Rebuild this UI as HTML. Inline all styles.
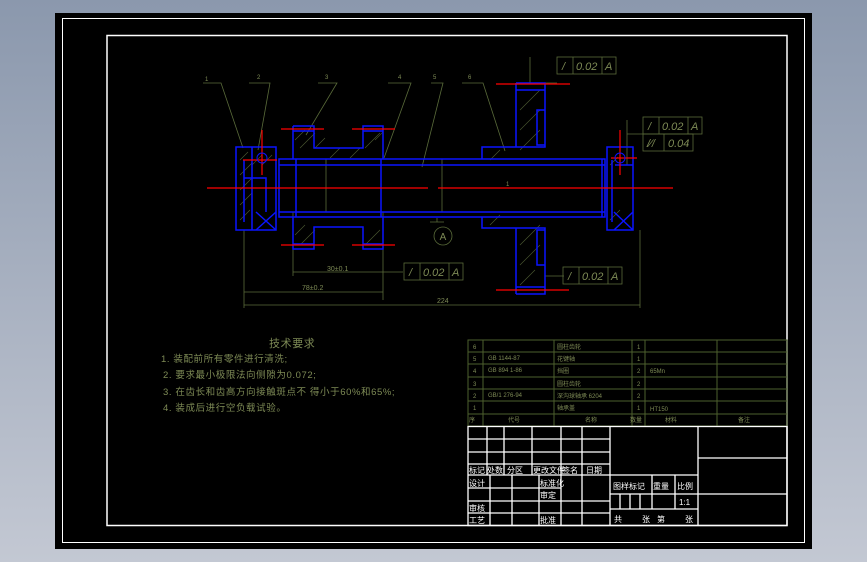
<!DOCTYPE html>
<html><head><meta charset="utf-8"><style>
html,body{margin:0;padding:0;}
body{width:867px;height:562px;background:linear-gradient(#8b98ad,#c3c8d3);overflow:hidden;}
svg{position:absolute;left:0;top:0;}
text{font-family:"Liberation Sans","Noto Sans CJK SC",sans-serif;}
</style></head><body>
<svg width="867" height="562" viewBox="0 0 867 562">
<rect x="55" y="13" width="757" height="536" fill="#000"/>
<rect x="62.5" y="18.5" width="742" height="524" fill="none" stroke="#fff" stroke-width="1"/>
<rect x="107" y="35.5" width="680" height="490" fill="none" stroke="#fff" stroke-width="1.5"/>

<g stroke="#5a6b3a" stroke-width="0.8" fill="none">
<path d="M203 83H221L243 148M249 83H270L258 150M318 83H337L306 135M388 83H411L384 158M431 83H443L422 167M462 83H483L505 151"/>
<path d="M530 74V83H557M530 57V83"/>
<path d="M627 120V165M627 134H643"/>
<path d="M293 212V276M383 212V300M244 230V308M640 230V308"/>
<path d="M293 272H383M383 272H403M244 292H383M244 305H640"/>
<path d="M545 276H564"/>
<path d="M437 218V222M430 222H444"/>
<path d="M326 159V212M442 159V212"/>
</g>
<circle cx="443" cy="236" r="9" fill="none" stroke="#5a6b3a" stroke-width="0.8"/>
<text x="443" y="240" font-size="10" fill="#7d8a55" text-anchor="middle">A</text>
<g fill="#7d8a55" font-size="6">
<text x="205" y="81">1</text><text x="257" y="79">2</text><text x="325" y="79">3</text><text x="398" y="79">4</text><text x="433" y="79">5</text><text x="468" y="79">6</text>
<text x="327" y="271" font-size="7">30±0.1</text><text x="302" y="290" font-size="7">78±0.2</text><text x="437" y="303" font-size="7">224</text>
</g>
<g stroke="#5a6b3a" stroke-width="0.8" fill="none">
<rect x="557" y="57" width="59" height="17"/><path d="M573 57V74M602 57V74"/>
<rect x="643" y="117" width="59" height="17"/><path d="M659 117V134M688 117V134"/>
<rect x="643" y="134" width="50" height="17"/><path d="M664 134V151"/>
<rect x="404" y="263" width="59" height="17"/><path d="M420 263V280M449 263V280"/>
<rect x="563" y="267" width="59" height="17"/><path d="M579 267V284M608 267V284"/>
</g>
<g fill="#7d8a55" font-size="11" font-style="italic">
<text x="562" y="70">/</text><text x="576" y="70">0.02</text><text x="605" y="70">A</text>
<text x="648" y="130">/</text><text x="662" y="130">0.02</text><text x="691" y="130">A</text>
<text x="647" y="147">/⁄/</text><text x="668" y="147">0.04</text>
<text x="409" y="276">/</text><text x="423" y="276">0.02</text><text x="452" y="276">A</text>
<text x="568" y="280">/</text><text x="582" y="280">0.02</text><text x="611" y="280">A</text>
</g>

<g stroke="#4d5a33" stroke-width="0.6">
<path d="M240 160l8-8M240 175l12-12M240 190l12-12M240 205l12-12M240 220l10-10M252 165l10-10M262 165l10-10M295 140l10-10M300 148l15-15M315 148l10-10M365 148l15-15M375 140l8-8M330 158l10-10M350 158l10-10M295 235l10-10M300 245l15-15M365 245l15-15M520 110l20-20M520 130l20-20M520 150l20-20M490 160l10-10M520 245l20-20M520 265l20-20M520 285l15-15M490 225l10-10M610 165l8-8M610 220l10-10"/>
</g>

<g stroke="#0a14ff" stroke-width="1.5" fill="none">
<rect x="279" y="159" width="326" height="58"/>
<path d="M279 165H605M279 212H605"/>
<path d="M236 147H276V230H236Z M244 160V222 M244 178H266V212 M252 147V230"/>
<path d="M256 212L276 230M276 212L256 230"/>
<path d="M293 126H314V148H363V126H383V159M293 159V126 M293 217V249H314V227H363V249H383V217"/>
<path d="M293 131H314M363 131H383M293 244H314M363 244H383"/>
<path d="M296 159V217M381 159V217"/>
<path d="M516 83H545V147H482V159M516 83V147 M516 90H545 M537 110H545V145H537Z"/>
<path d="M516 294H545V228H482V217M516 294V228 M516 287H545 M537 230H545V265H537Z"/>
<path d="M607 147H633V230H607Z M612 160V222 M615 165H633 M633 212L614 230M614 212L633 230"/>
<path d="M602 159V217"/>
</g>
<g stroke="#ff0000" stroke-width="1.2">
<path d="M207 188H428M438 188H673"/>
<path d="M243 160H277M611 158H637M262 130V175M620 130V175"/>
<path d="M281 129H324M352 129H395M281 245H324M352 245H395M496 84H570M496 290H569"/>
</g>
<circle cx="262" cy="158" r="5" fill="none" stroke="#0a14ff" stroke-width="1"/>
<circle cx="620" cy="158" r="5" fill="none" stroke="#0a14ff" stroke-width="1"/>
<g fill="#7d8a55" font-size="6"><text x="506" y="186">1</text></g>

<g fill="#7d8a55" font-size="9.5" letter-spacing="0.6">
<text x="269" y="347" font-size="11">技术要求</text>
<text x="161" y="362">1. 装配前所有零件进行清洗;</text>
<text x="163" y="378">2. 要求最小极限法向侧隙为0.072;</text>
<text x="163" y="395">3. 在齿长和齿高方向接触斑点不 得小于60%和65%;</text>
<text x="163" y="411">4. 装成后进行空负载试验。</text>
</g>

<g stroke="#4d5f2e" stroke-width="1" fill="none">
<rect x="468" y="340" width="319" height="86"/>
<path d="M468 352H787M468 364H787M468 377H787M468 389H787M468 401H787M468 414H787"/>
<path d="M483 340V426M554 340V426M632 340V426M645 340V426M717 340V426"/>
</g>
<g fill="#7d8a55" font-size="6">
<text x="473" y="349">6</text><text x="473" y="361">5</text><text x="473" y="373">4</text><text x="473" y="386">3</text><text x="473" y="398">2</text><text x="473" y="410">1</text>
<text x="488" y="360">GB 1144-87</text><text x="488" y="372">GB 894 1-86</text><text x="488" y="397">GB/1 276-94</text>
<text x="557" y="349">圆柱齿轮</text><text x="557" y="361">花键轴</text><text x="557" y="373">挡圈</text><text x="557" y="386">圆柱齿轮</text><text x="557" y="398">深沟球轴承 6204</text><text x="557" y="410">轴承盖</text>
<text x="637" y="349">1</text><text x="637" y="361">1</text><text x="637" y="373">2</text><text x="637" y="386">2</text><text x="637" y="398">2</text><text x="637" y="410">1</text>
<text x="650" y="373">65Mn</text><text x="650" y="411">HT150</text>
<text x="469" y="422">序</text><text x="508" y="422">代号</text><text x="585" y="422">名称</text><text x="630" y="422">数量</text><text x="665" y="422">材料</text><text x="738" y="422">备注</text>
</g>

<g stroke="#fff" stroke-width="1.3" fill="none">
<rect x="468" y="426.5" width="319" height="99"/>
<path d="M468 439H610M468 452H610M468 464H610M468 475H610"/>
<path d="M487 426V475M504 426V475M532 426V475M561 426V475M582 426V475M610 426V525"/>
<path d="M468 488H539M468 501H610M468 513H610M539 488H561"/>
<path d="M490 475V525M512 475V525M539 475V525M561 475V525M582 475V525"/>
<path d="M610 475H698M610 494H698M610 509H698M698 426V525"/>
<path d="M652 475V509M675 475V509M620 494V509M630 494V509M640 494V509"/>
<path d="M698 458H787M698 494H787"/>
</g>
<g fill="#fff" font-size="8">
<text x="469" y="473">标记</text><text x="487" y="473">处数</text><text x="507" y="473">分区</text><text x="533" y="473">更改文件</text><text x="562" y="473">签名</text><text x="586" y="473">日期</text>
<text x="469" y="486">设计</text><text x="540" y="486">标准化</text><text x="540" y="498">审定</text>
<text x="469" y="511">审核</text><text x="469" y="523">工艺</text><text x="540" y="523">批准</text>
<text x="613" y="489">图样标记</text><text x="653" y="489">重量</text><text x="677" y="489">比例</text>
<text x="679" y="505">1:1</text>
<text x="614" y="522">共</text><text x="642" y="522">张</text><text x="657" y="522">第</text><text x="685" y="522">张</text>
</g>
</svg>
</body></html>
